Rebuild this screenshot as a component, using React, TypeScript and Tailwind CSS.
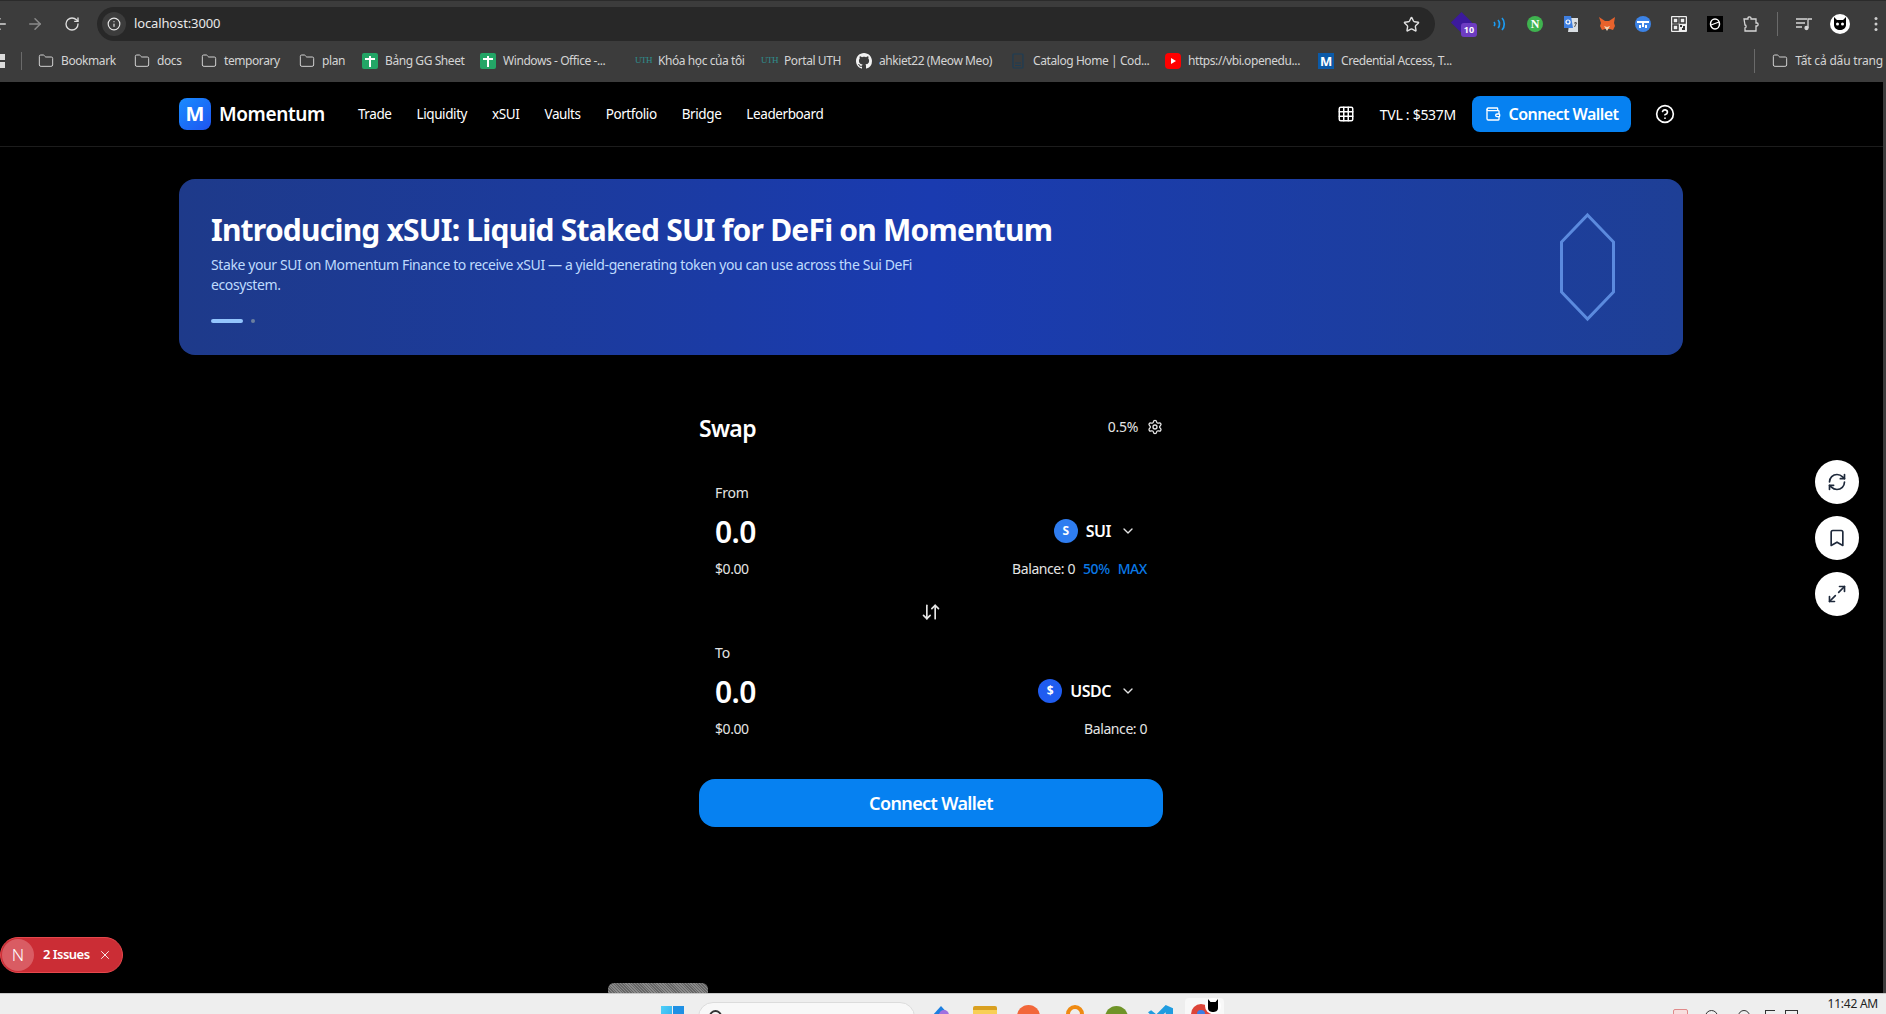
import { ArrowDownUp, Bookmark, ChevronDown, CircleHelp, Folder, Grid3x3, Info, Maximize2, RefreshCw, RotateCw, Settings, Star, ArrowLeft, ArrowRight, Wallet, X } from "lucide-react";

const NAV_ITEMS = ["Trade", "Liquidity", "xSUI", "Vaults", "Portfolio", "Bridge", "Leaderboard"];

const BOOKMARKS = [
    { label: "Bookmark", icon: "folder", width: "w-[96px]" },
    { label: "docs", icon: "folder", width: "w-[67px]" },
    { label: "temporary", icon: "folder", width: "w-[98px]" },
    { label: "plan", icon: "folder", width: "w-[63px]" },
    { label: "Bảng GG Sheet", icon: "sheet", width: "w-[118px]" },
    { label: "Windows - Office -...", icon: "sheet", width: "w-[155px]" },
    { label: "Khóa học của tôi", icon: "uth", width: "w-[126px]" },
    { label: "Portal UTH", icon: "uth", width: "w-[95px]" },
    { label: "ahkiet22 (Meow Meo)", icon: "github", width: "w-[154px]" },
    { label: "Catalog Home | Cod...", icon: "catalog", width: "w-[155px]" },
    { label: "https://vbi.openedu...", icon: "youtube", width: "w-[153px]" },
    { label: "Credential Access, T...", icon: "mitre", width: "w-[150px]" },
];

function BookmarkIcon({ icon }: { icon: string }) {
    if (icon === "folder") return <Folder size={16} strokeWidth={1.5} className="text-[#d0d0d0] shrink-0" />;
    if (icon === "sheet") {
        return (
            <span className="w-4 h-4 shrink-0 rounded-[2px] bg-[#23a566] flex items-center justify-center">
                <svg viewBox="0 0 16 16" className="w-4 h-4">
                    <path d="M3 6h10M8 3v11" stroke="#fff" strokeWidth="2" />
                </svg>
            </span>
        );
    }
    if (icon === "uth") {
        return <span className="w-4 shrink-0 text-[9px] font-['Liberation_Serif',serif] tracking-[-0.05em] text-[#2f8f8f] text-center">UTH</span>;
    }
    if (icon === "github") {
        return (
            <svg viewBox="0 0 16 16" className="w-4 h-4 shrink-0" fill="#f2f2f2">
                <path d="M8 0C3.58 0 0 3.58 0 8c0 3.54 2.29 6.53 5.47 7.59.4.07.55-.17.55-.38 0-.19-.01-.82-.01-1.49-2.01.37-2.53-.49-2.69-.94-.09-.23-.48-.94-.82-1.13-.28-.15-.68-.52-.01-.53.63-.01 1.08.58 1.23.82.72 1.21 1.87.87 2.33.66.07-.52.28-.87.51-1.07-1.78-.2-3.64-.89-3.64-3.95 0-.87.31-1.59.82-2.15-.08-.2-.36-1.02.08-2.12 0 0 .67-.21 2.2.82.64-.18 1.32-.27 2-.27s1.36.09 2 .27c1.53-1.04 2.2-.82 2.2-.82.44 1.1.16 1.92.08 2.12.51.56.82 1.27.82 2.15 0 3.07-1.87 3.75-3.65 3.95.29.25.54.73.54 1.48 0 1.07-.01 1.93-.01 2.2 0 .21.15.46.55.38A8.01 8.01 0 0 0 16 8c0-4.42-3.58-8-8-8Z" />
            </svg>
        );
    }
    if (icon === "youtube") {
        return (
            <span className="w-4 h-4 shrink-0 rounded-[4px] bg-[#f00] flex items-center justify-center">
                <svg viewBox="0 0 8 8" className="w-2 h-2" fill="#fff">
                    <path d="M2 1l5 3-5 3z" />
                </svg>
            </span>
        );
    }
    if (icon === "mitre") {
        return <span className="w-4 h-4 shrink-0 bg-[#0b5aa8] text-white text-[13px] font-bold leading-4 text-center">M</span>;
    }
    return (
        <svg viewBox="0 0 16 16" className="w-4 h-4 shrink-0" fill="none" stroke="#1d3d55" strokeWidth="1.2">
            <rect x="3" y="1" width="10" height="14" rx="1" />
            <path d="M5 10h6M5 12.5h6" />
        </svg>
    );
}

function ChromeBar() {
    return (
        <div className="h-[82px] shrink-0 bg-[#3c3c3c] border-t border-[#2b2b2b] font-['Noto_Sans',sans-serif]">
            {/* Address row */}
            <div className="h-[46px] flex items-center relative">
                <ArrowLeft size={18} className="text-[#d6d6d6] ml-[-9px]" />
                <ArrowRight size={18} className="text-[#8a8a8a] ml-[17px]" />
                <RotateCw size={16} className="text-[#dedede] ml-[20px]" />
                <div className="ml-[17px] w-[1338px] h-[34px] rounded-full bg-[#282828] flex items-center pl-[5px] pr-[15px]">
                    <span className="w-6 h-6 rounded-full bg-[#3c3c3c] flex items-center justify-center">
                        <Info size={14} className="text-[#e6e6e6]" />
                    </span>
                    <span className="ml-[8px] text-[13px] text-[#e8e8e8] tracking-[-0.01em]">localhost:3000</span>
                    <Star size={17} className="ml-auto text-[#e0e0e0]" />
                </div>
                <div className="flex items-center ml-[20px] gap-[20px]">
                    <span className="relative w-4 h-4">
                        <span className="absolute left-[-1px] top-[-1px] w-[15px] h-[15px] rotate-45 bg-[#3c1a9c]" />
                        <span className="absolute left-[6px] top-[7px] w-4 h-[14px] rounded-[3px] bg-[#6d3cc2] text-white text-[9px] font-bold leading-[14px] text-center">10</span>
                    </span>
                    <svg viewBox="0 0 16 16" className="w-4 h-4" fill="none" stroke="#1c9bf0" strokeWidth="1.7">
                        <path d="M3 6c1 1 1 3 0 4M7 4c2 2 2 6 0 8M11 2c3 3 3 9 0 12" />
                    </svg>
                    <span className="w-4 h-4 rounded-full bg-[#3fb34f] text-white text-[12px] font-bold font-['Liberation_Serif',serif] leading-4 text-center">N</span>
                    <svg viewBox="0 0 16 16" className="w-4 h-4">
                        <path d="M7 2h8v14H5z" fill="#d9dee3" />
                        <path d="M1 0h7l2 12H1z" fill="#3f7fe0" />
                        <path d="M11 7h3M12.5 6v1M11.5 11l2-4" stroke="#555" strokeWidth="1" fill="none" />
                        <circle cx="5" cy="6" r="2" fill="none" stroke="#fff" strokeWidth="1.2" />
                    </svg>
                    <svg viewBox="0 0 16 16" className="w-4 h-4">
                        <path d="M0 1l6 4h4l6-4-1 6 1 3-2 4-3-1H6l-3 1-2-4 1-3z" fill="#e8622c" />
                        <path d="M5 10l3 1 3-1-3 5z" fill="#f3d3b3" />
                    </svg>
                    <svg viewBox="0 0 16 16" className="w-4 h-4">
                        <circle cx="8" cy="8" r="8" fill="#3c83e6" />
                        <path d="M2 5h12v2H2zM4 9h2v3H4zM7 7h2v4H7zM10 9h2v3h-2z" fill="#fff" />
                    </svg>
                    <svg viewBox="0 0 16 16" className="w-4 h-4">
                        <rect width="16" height="16" rx="1" fill="#eeeeee" />
                        <path d="M2 2h5v5H2zM9 2h5v5H9zM2 9h5v5H2z" fill="none" stroke="#333" strokeWidth="1.5" />
                        <path d="M9 9h2v2H9zM12 10h2v4h-3v-2h1z" fill="#333" />
                    </svg>
                    <svg viewBox="0 0 16 16" className="w-4 h-4">
                        <rect width="16" height="16" fill="#000" />
                        <ellipse cx="8" cy="8" rx="4.5" ry="5" fill="none" stroke="#fff" strokeWidth="1.5" />
                        <path d="M4 9l8-3" stroke="#fff" strokeWidth="1.3" />
                    </svg>
                    <svg viewBox="0 0 16 16" className="w-4 h-4" fill="none" stroke="#d6d6d6" strokeWidth="1.3">
                        <path d="M1 3h4V2c0-1.5 3-1.5 3 0v1h5v4h1c1.500 0 1.500 3 0 3h-1v5H2v-3c1.500 0 1.500-3 0-3L1 3Z" />
                    </svg>
                    <span className="w-px h-6 bg-[#6a6a6a] ml-[-2px]" />
                    <svg viewBox="0 0 16 16" className="w-4 h-4 ml-[-2px]" fill="none" stroke="#d6d6d6" strokeWidth="1.3">
                        <path d="M0 3h11M0 7h9M0 11h6M12 12V3h4" />
                        <circle cx="10.500" cy="12" r="1.500" fill="#d6d6d6" />
                    </svg>
                    <svg viewBox="0 0 20 20" className="w-5 h-5 ml-[-2px]">
                        <circle cx="10" cy="10" r="10" fill="#fff" />
                        <path d="M4 3l3 3h6l3-3v8c0 3-3 5-6 5s-6-2-6-5z" fill="#000" />
                        <circle cx="7.500" cy="10" r="1.500" fill="#fff" />
                        <circle cx="12.500" cy="10" r="1.500" fill="#fff" />
                    </svg>
                    <svg viewBox="0 0 16 16" className="w-4 h-4 ml-[-2px]" fill="#cfcfcf">
                        <circle cx="8" cy="2.500" r="1.500" />
                        <circle cx="8" cy="8" r="1.500" />
                        <circle cx="8" cy="13.500" r="1.500" />
                    </svg>
                </div>
            </div>
            {/* Bookmarks row */}
            <div className="h-[27px] flex items-center text-[12px] text-[#d4d4d4] tracking-[-0.035em] relative">
                <span className="w-[5px] h-[14px] overflow-hidden grid grid-cols-1 gap-[2px]">
                    <span className="bg-[#dcdcdc]" />
                    <span className="bg-[#dcdcdc]" />
                </span>
                <span className="w-px h-[18px] bg-[#6a6a6a] ml-[16px] mr-[16px]" />
                {BOOKMARKS.map((item) => (
                    <span key={item.label} className={`${item.width} flex items-center gap-[7px] whitespace-nowrap shrink-0`}>
                        <BookmarkIcon icon={item.icon} />
                        {item.label}
                    </span>
                ))}
                <span className="w-px h-[24px] bg-[#6a6a6a] ml-auto mr-[17px]" />
                <Folder size={16} strokeWidth={1.5} className="text-[#d0d0d0] shrink-0 mr-[7px]" />
                <span className="whitespace-nowrap mr-[3px] tracking-[-0.015em]">Tất cả dấu trang</span>
            </div>
        </div>
    );
}

function NavBar() {
    return (
        <header className="h-[65px] shrink-0 border-b border-[#1c1c1c] pl-[179px] pr-[211px] flex items-center justify-between">
            <div className="flex items-center">
                <div className="w-8 h-8 rounded-lg bg-gradient-to-br from-[#1a8cff] to-[#2052f0] text-white text-[20px] font-bold flex items-center justify-center">M</div>
                <span className="ml-2 text-[19px] font-semibold text-white tracking-[-0.02em]">Momentum</span>
                <nav className="ml-[33px] flex items-center gap-[25px] text-[13.5px] text-white tracking-[-0.03em]">
                    {NAV_ITEMS.map((item) => (
                        <span key={item}>{item}</span>
                    ))}
                </nav>
            </div>
            <div className="flex items-center">
                <Grid3x3 size={18} className="text-white" />
                <span className="ml-[25px] text-[14px] text-white tracking-[-0.02em]">TVL : $537M</span>
                <button className="ml-[16px] w-[159px] h-[36px] rounded-lg bg-[#0681f1] text-white text-[16px] font-semibold tracking-[-0.035em] flex items-center justify-center gap-2">
                    <Wallet size={16} />
                    Connect Wallet
                </button>
                <CircleHelp size={20} className="ml-[24px] text-white" />
            </div>
        </header>
    );
}

function Banner() {
    return (
        <section className="ml-[179px] mr-[203px] mt-[32px] h-[176px] rounded-2xl bg-gradient-to-r from-[#1e3a8a] via-[#1a3bb0] to-[#1e3f96] px-[32px] pt-[32px] flex justify-between">
            <div className="w-[768px]">
                <h1 className="text-[30px] leading-[36px] mt-px font-bold text-white tracking-[-0.026em] whitespace-nowrap">Introducing xSUI: Liquid Staked SUI for DeFi on Momentum</h1>
                <p className="mt-[7px] text-[14px] leading-[20px] text-[#bfdbfe] tracking-[-0.028em]">
                    Stake your SUI on Momentum Finance to receive xSUI — a yield-generating token you can use across the Sui DeFi ecosystem.
                </p>
                <div className="mt-6 flex items-center gap-[8px]">
                    <span className="w-8 h-1 rounded-full bg-[#93c5fd]" />
                    <span className="w-1 h-1 rounded-full bg-[#6b7f9f]" />
                </div>
            </div>
            <svg viewBox="0 0 60 110" className="w-[60px] h-[110px] mr-[35px] mt-px" fill="none" stroke="#5b8ade" strokeWidth="3">
                <path d="M31.500 3 57.500 30V80L31.500 107 5.500 80V30Z" />
            </svg>
        </section>
    );
}

function TokenPanel({ label, symbol, glyph, circle, showActions }: { label: string; symbol: string; glyph: string; circle: string; showActions: boolean }) {
    return (
        <div className="px-4">
            <div className="text-[14px] leading-[20px] text-[#e5e5e5] tracking-[-0.01em]">{label}</div>
            <div className="mt-[8px] h-[40px] flex items-center justify-between">
                <span className="text-[30px] font-semibold text-white tracking-[-0.02em]">0.0</span>
                <span className="flex items-center mr-[11px]">
                    <span className={`w-6 h-6 rounded-full ${circle} text-white text-[12px] font-bold flex items-center justify-center`}>{glyph}</span>
                    <span className="ml-2 text-[16px] font-semibold text-white tracking-[-0.03em]">{symbol}</span>
                    <ChevronDown size={16} className="ml-[9px] text-[#e5e5e5]" />
                </span>
            </div>
            <div className="mt-[7px] h-[20px] flex items-center justify-between text-[14px] text-[#e5e5e5] tracking-[-0.03em]">
                <span>$0.00</span>
                <span className="flex items-center gap-2">
                    Balance: 0
                    {showActions && <span className="text-[#0a78e6] font-medium">50%</span>}
                    {showActions && <span className="text-[#0a78e6] font-medium">MAX</span>}
                </span>
            </div>
        </div>
    );
}

function SwapCard() {
    return (
        <div className="mr-[24px]">
            <section className="w-[464px] mx-auto mt-[57px]">
                <div className="h-[32px] flex items-center justify-between">
                    <h2 className="text-[23px] font-semibold text-white tracking-[-0.03em]">Swap</h2>
                    <div className="flex items-center gap-[9px] mb-[3px]">
                        <span className="text-[14px] text-[#e5e5e5] tracking-[-0.02em]">0.5%</span>
                        <Settings size={16} className="text-[#e5e5e5]" />
                    </div>
                </div>
                <div className="mt-[39px]">
                    <TokenPanel label="From" symbol="SUI" glyph="S" circle="bg-[#2f7df0]" showActions={true} />
                </div>
                <div className="h-[65px] pt-[24px] flex justify-center">
                    <ArrowDownUp size={20} className="text-[#e5e5e5]" />
                </div>
                <TokenPanel label="To" symbol="USDC" glyph="$" circle="bg-[#1f5cf0]" showActions={false} />
                <button className="mt-[41px] w-full h-[48px] rounded-2xl bg-[#0681f1] text-white text-[18px] font-semibold tracking-[-0.034em]">Connect Wallet</button>
            </section>
        </div>
    );
}

function Taskbar() {
    return (
        <footer className="h-[21px] shrink-0 bg-[#eeeeee] border-t border-[#c8c8c8] overflow-hidden flex items-start relative font-['Noto_Sans',sans-serif]">
            <div className="ml-[661px] mt-[12px] w-[23px] h-[24px] grid grid-cols-2 gap-[1px] shrink-0">
                <span className="bg-gradient-to-br from-[#4fd0f8] to-[#2aa8ec]" />
                <span className="bg-[#1f90e4]" />
            </div>
            <div className="ml-[14px] mt-[8px] w-[217px] h-[30px] rounded-full bg-[#f8f8f8] border border-[#dcdcdc] pl-[10px] flex items-start shrink-0">
                <span className="mt-[7px] w-[13px] h-[13px] rounded-full border-2 border-[#333] shrink-0" />
                <span className="ml-[14px] mt-[9px] text-[12px] text-[#555]">Search</span>
            </div>
            {/* Pinned apps */}
            <svg viewBox="0 0 22 22" className="ml-[15px] mt-[12px] w-[22px] h-[22px] shrink-0">
                <path d="M11 0 2 10h18z" fill="#1d7fe0" />
                <circle cx="14" cy="9" r="5" fill="#a070e0" />
            </svg>
            <div className="ml-[21px] mt-[12px] w-[24px] h-[16px] rounded-[2px] bg-[#f8cf55] border-t-[4px] border-[#d9a020] shrink-0" />
            <span className="ml-[20px] mt-[11px] w-[23px] h-[23px] rounded-full bg-[#f2673a] shrink-0" />
            <span className="ml-[26px] mt-[11px] w-[18px] h-[18px] rounded-full border-[4px] border-[#ef8a12] shrink-0" />
            <span className="ml-[21px] mt-[12px] w-[23px] h-[23px] rounded-full bg-[#6f9428] shrink-0" />
            <svg viewBox="0 0 24 24" className="ml-[20px] mt-[11px] w-[25px] h-[25px] shrink-0" fill="#1f9ce0">
                <path d="M17 0 24 3v18l-7 3-9-9-5 4-3-2 5-5-5-5 3-2 5 4zM17 7l-6 5 6 5z" />
            </svg>
            <div className="ml-[12px] mt-[4px] w-[39px] h-[30px] rounded-[4px] bg-[#f8f8f8] shrink-0 relative">
                <span className="absolute left-[6px] top-[6px] w-[20px] h-[20px] rounded-full bg-[#dd4438]" />
                <span className="absolute left-[12px] top-[12px] w-[8px] h-[8px] rounded-full bg-[#3a7fe8]" />
                <svg viewBox="0 0 16 16" className="absolute left-[20px] top-0 w-[16px] h-[16px]">
                    <circle cx="8" cy="8" r="8" fill="#fff" />
                    <path d="M3 1l2.500 3h5L13 1v9c0 3-2.500 4-5 4s-5-1-5-4z" fill="#000" />
                </svg>
            </div>
            {/* Tray */}
            <span className="ml-[449px] mt-[15px] w-[15px] h-[15px] rounded-[2px] bg-[#f8dede] border border-[#e08a8a] shrink-0" />
            <span className="ml-[17px] mt-[16px] w-[13px] h-[13px] rounded-full border border-[#333] shrink-0" />
            <span className="ml-[20px] mt-[16px] w-[12px] h-[12px] rounded-full border border-[#333] shrink-0" />
            <span className="ml-[15px] mt-[16px] w-[10px] h-[12px] border-l border-t border-[#333] shrink-0" />
            <span className="ml-[10px] mt-[16px] w-[13px] h-[12px] border border-[#333] shrink-0" />
            <span className="absolute right-[8px] top-[1px] text-[12px] text-[#222] tracking-[-0.02em]">11:42 AM</span>
        </footer>
    );
}

export default function App() {
    return (
        <div className="h-screen flex flex-col overflow-hidden bg-black relative font-['Noto_Sans',sans-serif]">
            <ChromeBar />
            <main className="flex-1 min-h-0 relative">
                <NavBar />
                <Banner />
                <SwapCard />

                {/* Floating actions */}
                <div className="absolute right-[27px] top-[378px] flex flex-col gap-3">
                    <button className="w-11 h-11 rounded-full bg-white flex items-center justify-center text-[#1e293b]">
                        <RefreshCw size={20} />
                    </button>
                    <button className="w-11 h-11 rounded-full bg-white flex items-center justify-center text-[#1e293b]">
                        <Bookmark size={20} />
                    </button>
                    <button className="w-11 h-11 rounded-full bg-white flex items-center justify-center text-[#1e293b]">
                        <Maximize2 size={20} />
                    </button>
                </div>

                {/* Next.js dev issues pill */}
                <div className="absolute left-0 top-[855px] w-[123px] h-[36px] rounded-full bg-[#cb2d35] border border-[#e5484d] flex items-center">
                    <span className="w-[32px] h-[32px] ml-px rounded-full bg-[#d95c63] text-white text-[17px] font-light flex items-center justify-center">N</span>
                    <span className="ml-[9px] text-[13px] font-semibold text-white tracking-[-0.04em]">2 Issues</span>
                    <X size={14} strokeWidth={1.5} className="ml-[8px] text-white" />
                </div>

                {/* Drag handle */}
                <div className="absolute left-[608px] bottom-0 w-[100px] h-[10px] rounded-t-md bg-[repeating-linear-gradient(45deg,#666666_0,#666666_1px,#8a8a8a_1px,#8a8a8a_2px)]" />

                {/* Window edge */}
                <div className="absolute right-0 top-0 bottom-0 w-[3px] bg-[#3c3c3c]" />
            </main>
            <Taskbar />
        </div>
    );
}
